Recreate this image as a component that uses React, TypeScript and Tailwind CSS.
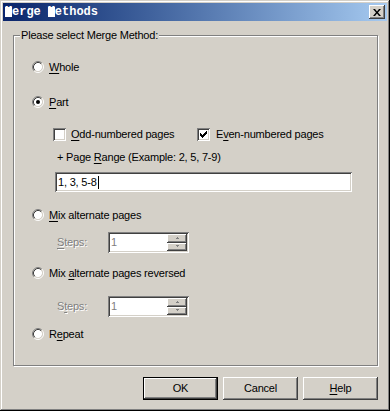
import React from "react";

const raised =
  "shadow-[inset_-1px_-1px_0_#404040,inset_1px_1px_0_#ffffff,inset_-2px_-2px_0_#808080,inset_2px_2px_0_#d4d0c8]";
const sunken =
  "shadow-[inset_1px_1px_0_#808080,inset_-1px_-1px_0_#ffffff,inset_2px_2px_0_#404040,inset_-2px_-2px_0_#d4d0c8]";

function Radio({ checked }: { checked?: boolean }) {
  return (
    <svg width="12" height="12" viewBox="0 0 12 12" className="shrink-0">
      <circle cx="6" cy="6" r="4.2" fill="#fff" />
      <path d="M2.11 9.89 A5.5 5.5 0 0 1 9.89 2.11" fill="none" stroke="#808080" strokeWidth="1" />
      <path d="M9.89 2.11 A5.5 5.5 0 0 1 2.11 9.89" fill="none" stroke="#ffffff" strokeWidth="1" />
      <path d="M2.82 9.18 A4.5 4.5 0 0 1 9.18 2.82" fill="none" stroke="#404040" strokeWidth="1" />
      <path d="M9.18 2.82 A4.5 4.5 0 0 1 2.82 9.18" fill="none" stroke="#d4d0c8" strokeWidth="1" />
      {checked && <circle cx="6" cy="6" r="2" fill="#000" />}
    </svg>
  );
}

function Checkbox({ checked }: { checked?: boolean }) {
  return (
    <div className={`w-[13px] h-[13px] bg-white shrink-0 flex items-center justify-center ${sunken}`}>
      {checked && (
        <svg width="7" height="7" viewBox="0 0 7 7">
          <path
            d="M6 0h1v1h-1zM5 1h2v1h-2zM0 2h1v1h-1zM4 2h3v1h-3zM0 3h2v1h-2zM3 3h3v1h-3zM0 4h5v1h-5zM1 5h3v1h-3zM2 6h1v1h-1z"
            fill="#000"
          />
        </svg>
      )}
    </div>
  );
}

function U({ children }: { children: React.ReactNode }) {
  return <span className="underline underline-offset-[2px]">{children}</span>;
}

function Spinner({ accel }: { accel: React.ReactNode }) {
  return (
    <div className="flex items-center h-[21px]">
      <span className="w-[53px] pl-[2px] text-[#808080] [text-shadow:1px_1px_0_#fff]">{accel}</span>
      <div className={`w-[81px] h-[21px] bg-white flex items-center ${sunken} p-[2px]`}>
        <span className="flex-1 pl-[1px] text-[#808080]">1</span>
        <div className="flex flex-col w-[20px] h-[17px]">
          {["up", "down"].map((d) => (
            <div key={d} className={`flex-1 bg-[#d4d0c8] flex items-center justify-center ${raised}`}>
              <svg width="5" height="3" viewBox="0 0 5 3">
                {d === "up" ? (
                  <path d="M2 0h1v1h1v1h-3v-1h1z" fill="#808080" />
                ) : (
                  <path d="M1 0h3v1h-1v1h-1v-1h-1z" fill="#808080" />
                )}
              </svg>
            </div>
          ))}
        </div>
      </div>
    </div>
  );
}

function Button({ children, isDefault }: { children: React.ReactNode; isDefault?: boolean }) {
  return (
    <div className={`w-[75px] h-[23px] ${isDefault ? "border border-black" : ""}`}>
      <div className={`w-full h-full bg-[#d4d0c8] flex items-center justify-center ${raised}`}>
        {children}
      </div>
    </div>
  );
}

export default function App() {
  return (
    <div
      className="w-[390px] h-[411px] bg-[#d4d0c8] p-[3px] flex flex-col text-[11px] tracking-[-0.2px] text-black shadow-[inset_-1px_-1px_0_#000,inset_1px_1px_0_#d4d0c8,inset_-2px_-2px_0_#808080,inset_2px_2px_0_#ffffff]"
      style={{ fontFamily: '"Liberation Sans", Arial, sans-serif' }}
    >
      <div className="h-[18px] bg-gradient-to-r from-[#0a246a] to-[#a6caf0] flex items-center justify-between pl-[2px] pr-[2px]">
        <span
          className="text-white font-bold text-[12px] tracking-normal flex items-center"
          style={{ fontFamily: '"Liberation Mono", "Courier New", monospace' }}
        >
          <span className="inline-block w-[7px] h-[10px] bg-white text-white leading-[10px]">M</span>
          <span>erge </span>
          <span className="inline-block w-[7px] h-[10px] bg-white text-white leading-[10px] ml-[7px]">M</span>
          <span>ethods</span>
        </span>
        <div className={`w-[16px] h-[14px] bg-[#d4d0c8] flex items-center justify-center ${raised}`}>
          <svg width="8" height="7" viewBox="0 0 8 7">
            <path d="M0 0h2l2 2.5 2-2.5h2l-3 3.5 3 3.5h-2l-2-2.5-2 2.5h-2l3-3.5z" fill="#000" />
          </svg>
        </div>
      </div>

      <div className="relative ml-[10px] mt-[14px] w-[365px] h-[331px] border border-[#808080] shadow-[1px_1px_0_#fff,inset_1px_1px_0_#fff]">
        <span className="absolute left-[6px] top-[-8px] bg-[#d4d0c8] px-[1px] leading-[14px]">
          Please select Merge Method:
        </span>

        <div className="pl-[18px] flex flex-col">
          <div className="mt-[23px] h-[16px] flex items-center gap-[5px]">
            <Radio />
            <span>
              <U>W</U>hole
            </span>
          </div>
          <div className="mt-[19px] h-[16px] flex items-center gap-[5px]">
            <Radio checked />
            <span>
              <U>P</U>art
            </span>
          </div>
          <div className="mt-[16px] h-[16px] flex items-center pl-[21px]">
            <div className="w-[144px] flex items-center gap-[5px]">
              <Checkbox />
              <span>
                <U>O</U>dd-numbered pages
              </span>
            </div>
            <div className="flex items-center gap-[6px]">
              <Checkbox checked />
              <span>
                E<U>v</U>en-numbered pages
              </span>
            </div>
          </div>
          <div className="mt-[7px] h-[16px] flex items-center pl-[25px]">
            <span>
              + Page <U>R</U>ange (Example: 2, 5, 7-9)
            </span>
          </div>
          <div className="mt-[7px] ml-[23px] w-[297px] h-[20px]">
            <div className={`w-full h-full bg-white flex items-center pl-[3px] ${sunken}`}>
              <span>1, 3, 5-8</span>
              <span className="w-[1px] h-[13px] bg-black ml-[1px]" />
            </div>
          </div>
          <div className="mt-[15px] h-[16px] flex items-center gap-[5px]">
            <Radio />
            <span>
              <U>M</U>ix alternate pages
            </span>
          </div>
          <div className="mt-[9px] pl-[23px]">
            <Spinner accel={<><U>S</U>teps:</>} />
          </div>
          <div className="mt-[12px] h-[16px] flex items-center gap-[5px]">
            <Radio />
            <span>
              Mix <U>a</U>lternate pages reversed
            </span>
          </div>
          <div className="mt-[15px] pl-[23px]">
            <Spinner accel={<>S<U>t</U>eps:</>} />
          </div>
          <div className="mt-[9px] h-[16px] flex items-center gap-[5px]">
            <Radio />
            <span>
              R<U>e</U>peat
            </span>
          </div>
        </div>
      </div>

      <div className="mt-[11px] flex justify-end gap-[5px] pr-[9px]">
        <Button isDefault>OK</Button>
        <Button>Cancel</Button>
        <Button>
          <span>
            <U>H</U>elp
          </span>
        </Button>
      </div>
    </div>
  );
}
